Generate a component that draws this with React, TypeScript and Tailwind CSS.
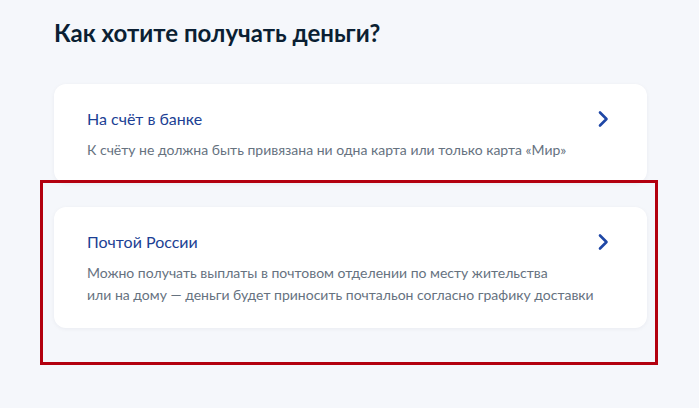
const options = [
  {
    title: "На счёт в банке",
    text: ["К счёту не должна быть привязана ни одна карта или только карта «Мир»"],
  },
  {
    title: "Почтой России",
    text: [
      "Можно получать выплаты в почтовом отделении по месту жительства",
      "или на дому — деньги будет приносить почтальон согласно графику доставки",
    ],
  },
]

function Chevron() {
  return (
    <svg width="12" height="18" viewBox="0 0 12 18" fill="none">
      <path
        d="M3 2.5l6.5 6.5L3 15.5"
        stroke="#1f47a6"
        strokeWidth="2.6"
        strokeLinecap="round"
        strokeLinejoin="round"
      />
    </svg>
  )
}

export default function App() {
  return (
    <div className="relative min-h-[408px] w-[699px] bg-[#f5f7fb] font-['Lato',sans-serif]">
      <div className="pl-[54px] pt-[17px] w-[647px]">
        <h1 className="text-[24px] leading-[32px] font-bold text-[#0b1f33]">
          Как хотите получать деньги?
        </h1>

        <div className="mt-[35px] flex flex-col gap-[24px]">
          {options.map((o) => (
            <div
              key={o.title}
              className="rounded-[12px] bg-white pl-[33px] pr-[38px] pt-[23px] pb-[22px] shadow-[0_1px_4px_rgba(0,20,60,0.05)]"
            >
              <div className="flex items-center justify-between h-[24px]">
                <span className="text-[16px] leading-[24px] text-[#1c3f94]">{o.title}</span>
                <Chevron />
              </div>
              <div className="mt-[8px] text-[14px] leading-[22px] text-[#66727f]">
                {o.text.map((t) => (
                  <div key={t}>{t}</div>
                ))}
              </div>
            </div>
          ))}
        </div>
      </div>

      {/* highlight frame */}
      <div className="absolute left-[40px] top-[180px] w-[618px] h-[185px] border-[3px] border-[#b3000f] pointer-events-none" />
    </div>
  )
}
